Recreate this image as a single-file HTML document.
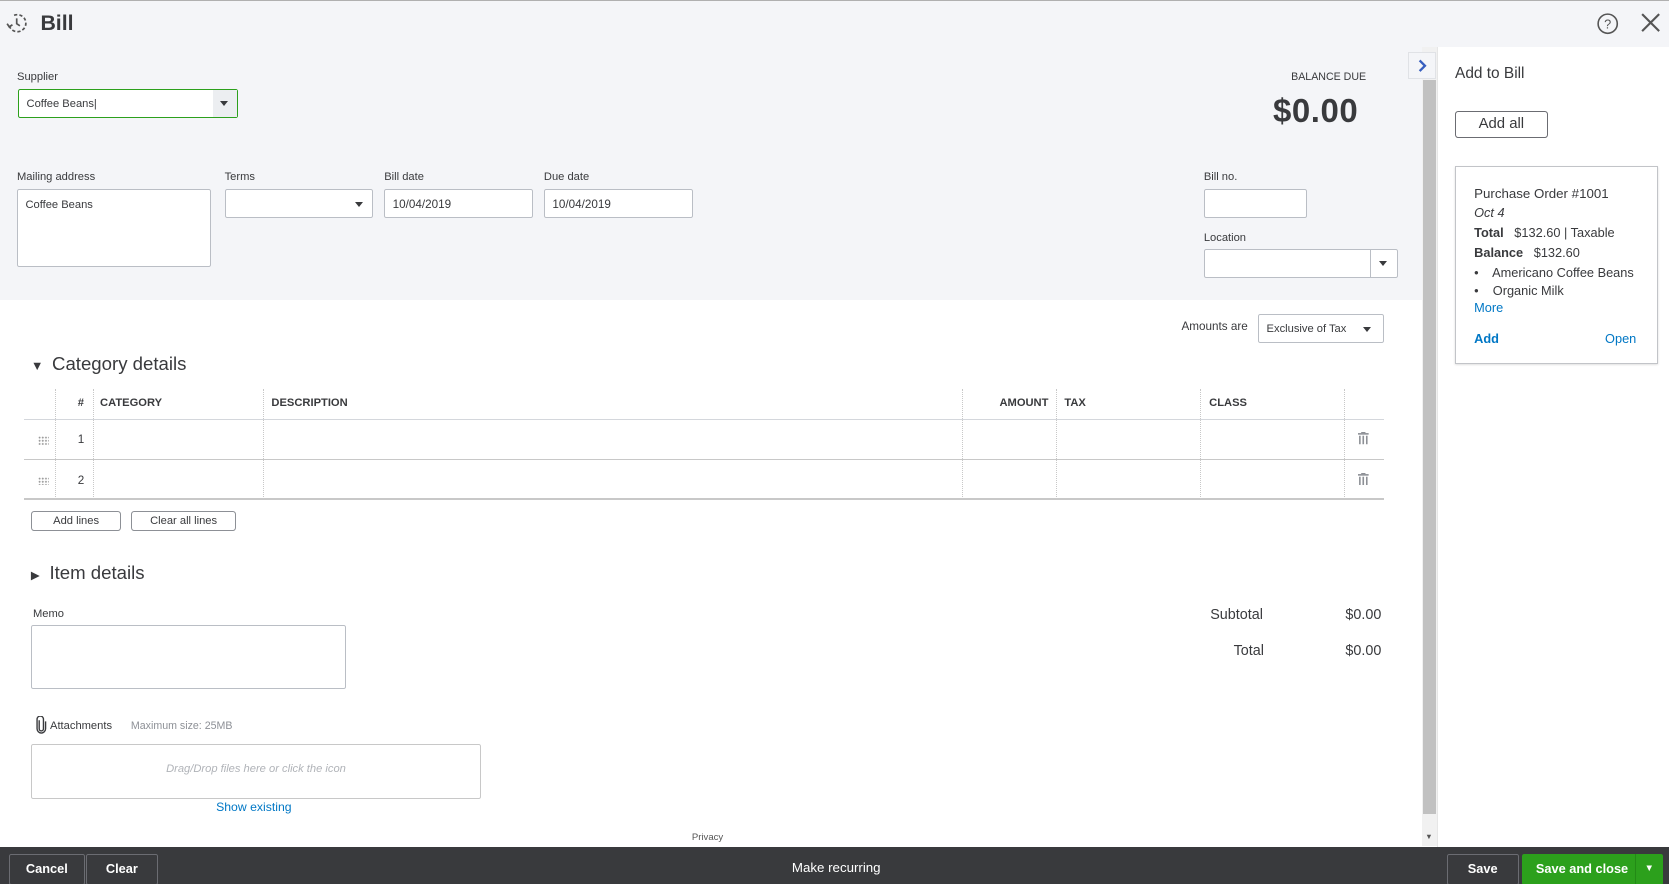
<!DOCTYPE html>
<html><head><meta charset="utf-8"><style>
*{box-sizing:border-box;margin:0;padding:0}
html,body{width:1669px;height:884px;overflow:hidden;background:#fff}
#r{zoom:1.0644;position:relative;width:1568px;height:831px;font-family:"Liberation Sans",sans-serif;color:#393a3d;font-size:11px}
.a{position:absolute}
.in{position:absolute;background:#fff;border:1px solid #babec5;border-radius:2px}
.lbl{position:absolute;font-size:10.5px;color:#393a3d}
.btn{position:absolute;border:1px solid #8d9096;border-radius:3px;background:#fff;text-align:center;font-size:10.5px;color:#393a3d}
.vl{position:absolute;top:365px;height:104px;border-left:1px dotted #c8c8c8}
.th{position:absolute;top:373px;font-size:10.5px;font-weight:bold;color:#393a3d}
.tri{position:absolute;width:0;height:0;border-left:4px solid transparent;border-right:4px solid transparent;border-top:5px solid #393a3d}
.grip{position:absolute;left:36px;width:10px;height:8px;background-image:radial-gradient(circle,#999 0.8px,transparent 1px);background-size:3px 3px}
.bb{position:absolute;top:802px;height:29px;border:1px solid #6b6c72;color:#fff;font-size:12px;line-height:27px;text-align:center;font-weight:bold;border-radius:2px}
</style></head><body><div id="r">
<div class="a" style="left:0;top:0;width:1568px;height:282px;background:#f4f5f8"></div>
<div class="a" style="left:0;top:0;width:1568px;height:1px;background:#b0b0b0"></div>
<svg class="a" style="left:5px;top:11px" width="22" height="22" viewBox="0 0 22 22" fill="none" stroke="#555" stroke-width="1.6"><path d="M4 13a8 8 0 1 0 3-9" stroke-dasharray="3 2"/><path d="M11 6v5l3 2"/><path d="M2 11l2 3 3-2"/></svg>
<div class="a" style="left:38px;top:10px;font-size:20px;font-weight:bold;color:#393a3d">Bill</div>
<svg class="a" style="left:1499px;top:11px" width="22" height="22" viewBox="0 0 22 22"><circle cx="11" cy="11" r="9" fill="none" stroke="#555" stroke-width="1.5"/><text x="11" y="15.5" font-size="12" text-anchor="middle" fill="#555" font-family="Liberation Sans">?</text></svg>
<svg class="a" style="left:1541px;top:11px" width="20" height="20" viewBox="0 0 20 20" stroke="#555" stroke-width="2"><path d="M2 2L18 18M18 2L2 18"/></svg>

<div class="lbl" style="left:16px;top:67px">Supplier</div>
<div class="in" style="left:17px;top:84px;width:207px;height:27px;border-color:#2ca01c"><span class="a" style="left:7px;top:7px;font-size:10.5px">Coffee Beans|</span><div class="a" style="right:0;top:0;width:23px;height:25px;background:#eceef1"><span class="tri" style="left:7px;top:10px"></span></div></div>
<div class="a" style="left:1213px;top:67px;font-size:10px;color:#393a3d">BALANCE DUE</div>
<div class="a" style="left:1196px;top:86px;font-size:31px;font-weight:bold;color:#393a3d;letter-spacing:0.5px">$0.00</div>

<div class="lbl" style="left:16px;top:161px">Mailing address</div>
<div class="in" style="left:16px;top:178px;width:182px;height:73px"><span class="a" style="left:7px;top:8px;font-size:10.5px">Coffee Beans</span></div>
<div class="lbl" style="left:211px;top:161px">Terms</div>
<div class="in" style="left:211px;top:178px;width:139px;height:27px"><span class="tri" style="right:8px;top:11px"></span></div>
<div class="lbl" style="left:361px;top:161px">Bill date</div>
<div class="in" style="left:361px;top:178px;width:140px;height:27px"><span class="a" style="left:7px;top:7px">10/04/2019</span></div>
<div class="lbl" style="left:511px;top:161px">Due date</div>
<div class="in" style="left:511px;top:178px;width:140px;height:27px"><span class="a" style="left:7px;top:7px">10/04/2019</span></div>
<div class="lbl" style="left:1131px;top:161px">Bill no.</div>
<div class="in" style="left:1131px;top:178px;width:97px;height:27px"></div>
<div class="lbl" style="left:1131px;top:218px">Location</div>
<div class="in" style="left:1131px;top:234px;width:182px;height:27px"><div class="a" style="right:0;top:0;width:25px;height:25px;border-left:1px solid #babec5"><span class="tri" style="left:8px;top:10px"></span></div></div>

<div class="a" style="left:1110px;top:301px;font-size:11px">Amounts are</div>
<div class="in" style="left:1182px;top:295px;width:118px;height:27px"><span class="a" style="left:7px;top:8px;font-size:10.5px">Exclusive of Tax</span><span class="tri" style="right:11px;top:11px"></span></div>

<div class="a" style="left:29px;top:332px;font-size:17.5px"><span style="font-size:12px;margin-right:8px">▼</span>Category details</div>
<div class="vl" style="left:52px"></div><div class="vl" style="left:87px"></div><div class="vl" style="left:247px"></div><div class="vl" style="left:904px"></div><div class="vl" style="left:992px"></div><div class="vl" style="left:1127px"></div><div class="vl" style="left:1263px"></div>
<div class="th" style="left:73px">#</div><div class="th" style="left:94px">CATEGORY</div><div class="th" style="left:255px">DESCRIPTION</div><div class="th" style="left:939px">AMOUNT</div><div class="th" style="left:1000px">TAX</div><div class="th" style="left:1136px">CLASS</div>
<div class="a" style="left:23px;top:394px;width:1277px;height:1px;background:#d4d7dc"></div>
<div class="a" style="left:23px;top:431px;width:1277px;height:1px;background:#c8c8c8"></div>
<div class="a" style="left:23px;top:468px;width:1277px;height:2px;background:#c8c8c8"></div>
<div class="grip" style="top:410px"></div><div class="grip" style="top:448px"></div>
<div class="a" style="left:73px;top:407px">1</div><div class="a" style="left:73px;top:445px">2</div>
<svg class="a" style="left:1276px;top:406px" width="10" height="12" viewBox="0 0 10 12" fill="#8d9096"><rect x="0" y="1" width="10" height="1.5"/><rect x="3" y="0" width="4" height="1"/><rect x="1" y="3.5" width="1.5" height="8"/><rect x="4.2" y="3.5" width="1.5" height="8"/><rect x="7.5" y="3.5" width="1.5" height="8"/></svg>
<svg class="a" style="left:1276px;top:444px" width="10" height="12" viewBox="0 0 10 12" fill="#8d9096"><rect x="0" y="1" width="10" height="1.5"/><rect x="3" y="0" width="4" height="1"/><rect x="1" y="3.5" width="1.5" height="8"/><rect x="4.2" y="3.5" width="1.5" height="8"/><rect x="7.5" y="3.5" width="1.5" height="8"/></svg>
<div class="btn" style="left:29px;top:480px;width:85px;height:19px;line-height:17px">Add lines</div>
<div class="btn" style="left:123px;top:480px;width:99px;height:19px;line-height:17px">Clear all lines</div>

<div class="a" style="left:29px;top:528px;font-size:17.5px"><span style="font-size:11px;margin-right:9px">▶</span>Item details</div>
<div class="lbl" style="left:31px;top:571px">Memo</div>
<div class="in" style="left:29px;top:587px;width:296px;height:60px"></div>
<div class="a" style="left:1137px;top:570px;font-size:13.5px">Subtotal</div><div class="a" style="left:1264px;top:570px;font-size:13.5px">$0.00</div>
<div class="a" style="left:1159px;top:604px;font-size:13.5px">Total</div><div class="a" style="left:1264px;top:604px;font-size:13.5px">$0.00</div>
<svg class="a" style="left:34px;top:673px" width="10" height="17" viewBox="0 0 10 17" fill="none" stroke="#393a3d" stroke-width="1.3"><path d="M3 4v8a2 2 0 0 0 4 0V3a3 3 0 0 0-6 0v9a4 4 0 0 0 8 0V5"/></svg>
<div class="a" style="left:47px;top:676px;font-size:10.5px;color:#393a3d">Attachments</div>
<div class="a" style="left:123px;top:676px;font-size:10px;color:#8d9096">Maximum size: 25MB</div>
<div class="in" style="left:29px;top:699px;width:423px;height:52px;border-color:#c8c8c8"><div class="a" style="left:0;right:0;top:17px;text-align:center;font-style:italic;color:#b0b3b8;font-size:10.5px">Drag/Drop files here or click the icon</div></div>
<div class="a" style="left:203px;top:752px;font-size:11.5px;color:#0077c5">Show existing</div>
<div class="a" style="left:650px;top:782px;font-size:9px;color:#555">Privacy</div>

<div class="a" style="left:1336px;top:44px;width:14px;height:751px;background:#f1f1f1"></div>
<div class="a" style="left:1337px;top:75px;width:12px;height:690px;background:#c1c1c1"></div>
<div class="a" style="left:1339px;top:782px;font-size:7px;color:#555">▼</div>
<div class="a" style="left:1323px;top:49px;width:26px;height:25px;background:#f4f5f8;border:1px solid #e0e2e6"><svg width="24" height="23" viewBox="0 0 24 23"><path d="M10 7l5 5-5 5" fill="none" stroke="#365ebf" stroke-width="2.2"/></svg></div>
<div class="a" style="left:1350px;top:44px;width:218px;height:752px;background:#fff;border-left:1px solid #e6e6e6"></div>
<div class="a" style="left:1367px;top:61px;font-size:14.5px">Add to Bill</div>
<div class="btn" style="left:1367px;top:104px;width:87px;height:26px;line-height:24px;font-size:14px;border-color:#6b6c72">Add all</div>
<div class="a" style="left:1367px;top:156px;width:191px;height:186px;border:1px solid #c2c4c8;box-shadow:0 1px 2px rgba(0,0,0,.15)">
<div class="a" style="left:17px;top:18px;font-size:12.5px">Purchase Order #1001</div>
<div class="a" style="left:17px;top:36px;font-size:12px;font-style:italic">Oct 4</div>
<div class="a" style="left:17px;top:54px;font-size:12px"><b>Total</b>&nbsp;&nbsp; $132.60 | Taxable</div>
<div class="a" style="left:17px;top:73px;font-size:12px"><b>Balance</b>&nbsp;&nbsp; $132.60</div>
<div class="a" style="left:17px;top:92px;font-size:12px">•&nbsp;&nbsp;&nbsp; Americano Coffee Beans</div>
<div class="a" style="left:17px;top:109px;font-size:12px">•&nbsp;&nbsp;&nbsp; Organic Milk</div>
<div class="a" style="left:17px;top:125px;font-size:12px;color:#0077c5">More</div>
<div class="a" style="left:17px;top:154px;font-size:12px;color:#0077c5;font-weight:bold">Add</div>
<div class="a" style="left:140px;top:154px;font-size:12px;color:#0077c5">Open</div>
</div>

<div class="a" style="left:0;top:796px;width:1568px;height:35px;background:#393a3d"></div>
<div class="bb" style="left:8px;width:72px">Cancel</div>
<div class="bb" style="left:81px;width:67px">Clear</div>
<div class="a" style="left:744px;top:808px;font-size:12.5px;color:#fff">Make recurring</div>
<div class="bb" style="left:1359px;width:68px">Save</div>
<div class="a" style="left:1430px;top:802px;width:132px;height:29px;background:#2ca01c;border-radius:2px;color:#fff;font-size:12px;font-weight:bold;line-height:29px"><span style="margin-left:13px">Save and close</span><span class="a" style="right:0;top:0;width:26px;height:29px;border-left:1px solid #238a16;text-align:center;font-size:9px">▼</span></div>
</div></body></html>
